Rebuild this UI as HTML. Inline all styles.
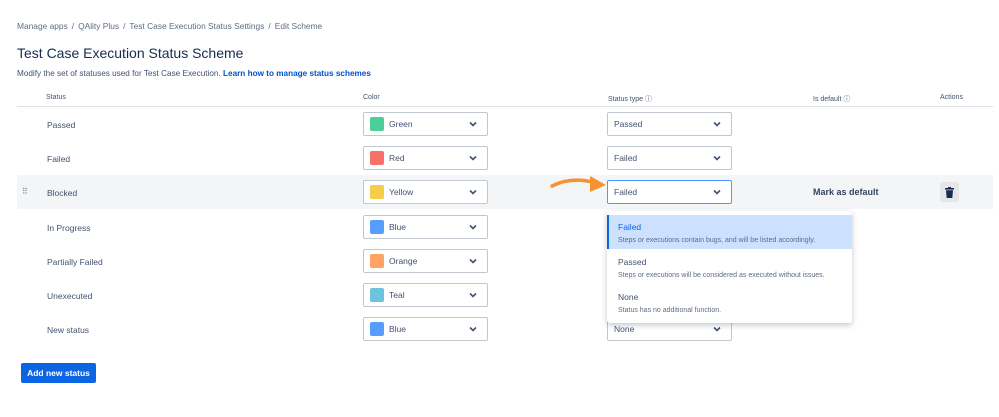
<!DOCTYPE html>
<html><head><style>
body{margin:0;width:999px;height:417px;background:#fff;font-family:"Liberation Sans",sans-serif;color:#172b4d;position:relative;overflow:hidden}
.a{position:absolute}
.bc{left:17px;top:21px;font-size:8.4px;color:#5e6c84}
.bc i{font-style:normal;margin:0 4px}
h1{position:absolute;left:17px;top:45px;margin:0;font-size:14px;font-weight:normal;color:#172b4d}
.sub{left:17px;top:69px;font-size:8.2px;color:#42526e}
.sub b{color:#0052cc}
.th{top:94px;font-size:7px;color:#42526e}
.line{left:17px;top:106px;width:976px;height:1px;background:#dfe1e6}
.row{left:17px;width:976px;height:34px}
.lbl{font-size:8.5px;color:#42526e;left:47px}
.sel{height:24px;border:1px solid #c1c7d0;border-radius:2px;background:#fff;box-sizing:border-box;width:125px;font-size:8.5px;color:#42526e}
.sel .t{position:absolute;top:6px}
.sel .sw{position:absolute;left:6px;top:4px;width:14px;height:14px;border-radius:2px}
.sel .ch{position:absolute;right:10px;top:8px}
.dd{left:607px;top:211px;width:245px;height:112px;background:#fff;border-radius:3px;box-shadow:0 2px 6px rgba(9,30,66,.25)}
.it{position:absolute;left:0;width:245px;height:34px}
.it .n{position:absolute;left:11px;top:7px;font-size:8.5px;color:#42526e}
.it .d{position:absolute;left:11px;top:22px;font-size:7px;color:#5e6c84}
</style></head><body>
<div class="a bc">Manage apps<i>/</i>QAlity Plus<i>/</i>Test Case Execution Status Settings<i>/</i>Edit Scheme</div>
<h1>Test Case Execution Status Scheme</h1>
<div class="a sub">Modify the set of statuses used for Test Case Execution. <b>Learn how to manage status schemes</b></div>
<div class="a th" style="left:46px">Status</div>
<div class="a th" style="left:363px">Color</div>
<div class="a th" style="left:608px">Status type ⓘ</div>
<div class="a th" style="left:813px">Is default ⓘ</div>
<div class="a th" style="left:940px">Actions</div>
<div class="a line"></div>
<div class="a row" style="top:175px;background:#f4f5f7"></div>
<div class="a" style="left:22px;top:187px;font-size:8px;color:#6b778c">⠿</div>

<div class="a lbl" style="top:120px">Passed</div>
<div class="a lbl" style="top:154px">Failed</div>
<div class="a lbl" style="top:188px">Blocked</div>
<div class="a lbl" style="top:223px">In Progress</div>
<div class="a lbl" style="top:257px">Partially Failed</div>
<div class="a lbl" style="top:291px">Unexecuted</div>
<div class="a lbl" style="top:325px">New status</div>

<svg width="0" height="0" style="position:absolute"><defs><path id="c" d="M1 1.5L4 4.5L7 1.5" stroke="#42526e" stroke-width="1.6" fill="none"/></defs></svg>

<div class="a sel" style="left:363px;top:112px"><span class="sw" style="background:#4bce97"></span><span class="t" style="left:25px">Green</span><svg class="ch" width="8" height="6" viewBox="0 0 8 6"><use href="#c"/></svg></div>
<div class="a sel" style="left:363px;top:146px"><span class="sw" style="background:#f87168"></span><span class="t" style="left:25px">Red</span><svg class="ch" width="8" height="6" viewBox="0 0 8 6"><use href="#c"/></svg></div>
<div class="a sel" style="left:363px;top:180px"><span class="sw" style="background:#f5cd47"></span><span class="t" style="left:25px">Yellow</span><svg class="ch" width="8" height="6" viewBox="0 0 8 6"><use href="#c"/></svg></div>
<div class="a sel" style="left:363px;top:215px"><span class="sw" style="background:#579dff"></span><span class="t" style="left:25px">Blue</span><svg class="ch" width="8" height="6" viewBox="0 0 8 6"><use href="#c"/></svg></div>
<div class="a sel" style="left:363px;top:249px"><span class="sw" style="background:#fea362"></span><span class="t" style="left:25px">Orange</span><svg class="ch" width="8" height="6" viewBox="0 0 8 6"><use href="#c"/></svg></div>
<div class="a sel" style="left:363px;top:283px"><span class="sw" style="background:#6cc3e0"></span><span class="t" style="left:25px">Teal</span><svg class="ch" width="8" height="6" viewBox="0 0 8 6"><use href="#c"/></svg></div>
<div class="a sel" style="left:363px;top:317px"><span class="sw" style="background:#579dff"></span><span class="t" style="left:25px">Blue</span><svg class="ch" width="8" height="6" viewBox="0 0 8 6"><use href="#c"/></svg></div>

<div class="a sel" style="left:607px;top:112px"><span class="t" style="left:6px">Passed</span><svg class="ch" width="8" height="6" viewBox="0 0 8 6"><use href="#c"/></svg></div>
<div class="a sel" style="left:607px;top:146px"><span class="t" style="left:6px">Failed</span><svg class="ch" width="8" height="6" viewBox="0 0 8 6"><use href="#c"/></svg></div>
<div class="a sel" style="left:607px;top:180px;border:1.5px solid #4c9aff"><span class="t" style="left:6px">Failed</span><svg class="ch" width="8" height="6" viewBox="0 0 8 6"><use href="#c"/></svg></div>
<div class="a sel" style="left:607px;top:317px"><span class="t" style="left:6px">None</span><svg class="ch" width="8" height="6" viewBox="0 0 8 6"><use href="#c"/></svg></div>

<svg class="a" style="left:550px;top:172px" width="58" height="22" viewBox="0 0 58 22"><path d="M2 14 Q22 4 46 11" stroke="#f79232" stroke-width="3.5" fill="none" stroke-linecap="round"/><path d="M40 4 L56 13 L40 20 Z" fill="#f79232"/></svg>

<div class="a" style="left:813px;top:187px;font-size:9px;font-weight:bold;color:#344563">Mark as default</div>
<div class="a" style="left:940px;top:182px;width:19px;height:20px;background:#e4e6ea;border-radius:3px"></div>
<svg class="a" style="left:945px;top:187px" width="9" height="11" viewBox="0 0 9 11"><rect x="0" y="1" width="9" height="1.6" fill="#172b4d"/><rect x="3" y="0" width="3" height="1.5" fill="#172b4d"/><path d="M1 3.2H8L7.3 11H1.7Z" fill="#172b4d"/></svg>

<div class="a dd">
 <div class="it" style="top:4px;background:#cce0ff;border-left:2px solid #0c66e4;box-sizing:border-box"><span class="n" style="color:#0c66e4;left:9px">Failed</span><span class="d" style="left:9px">Steps or executions contain bugs, and will be listed accordingly.</span></div>
 <div class="it" style="top:39px"><span class="n">Passed</span><span class="d">Steps or executions will be considered as executed without issues.</span></div>
 <div class="it" style="top:74px"><span class="n">None</span><span class="d">Status has no additional function.</span></div>
</div>

<div class="a" style="left:21px;top:363px;width:75px;height:20px;background:#0c66e4;border-radius:2px;color:#fff;font-size:8.5px;font-weight:bold;text-align:center;line-height:20px">Add new status</div>
</body></html>
